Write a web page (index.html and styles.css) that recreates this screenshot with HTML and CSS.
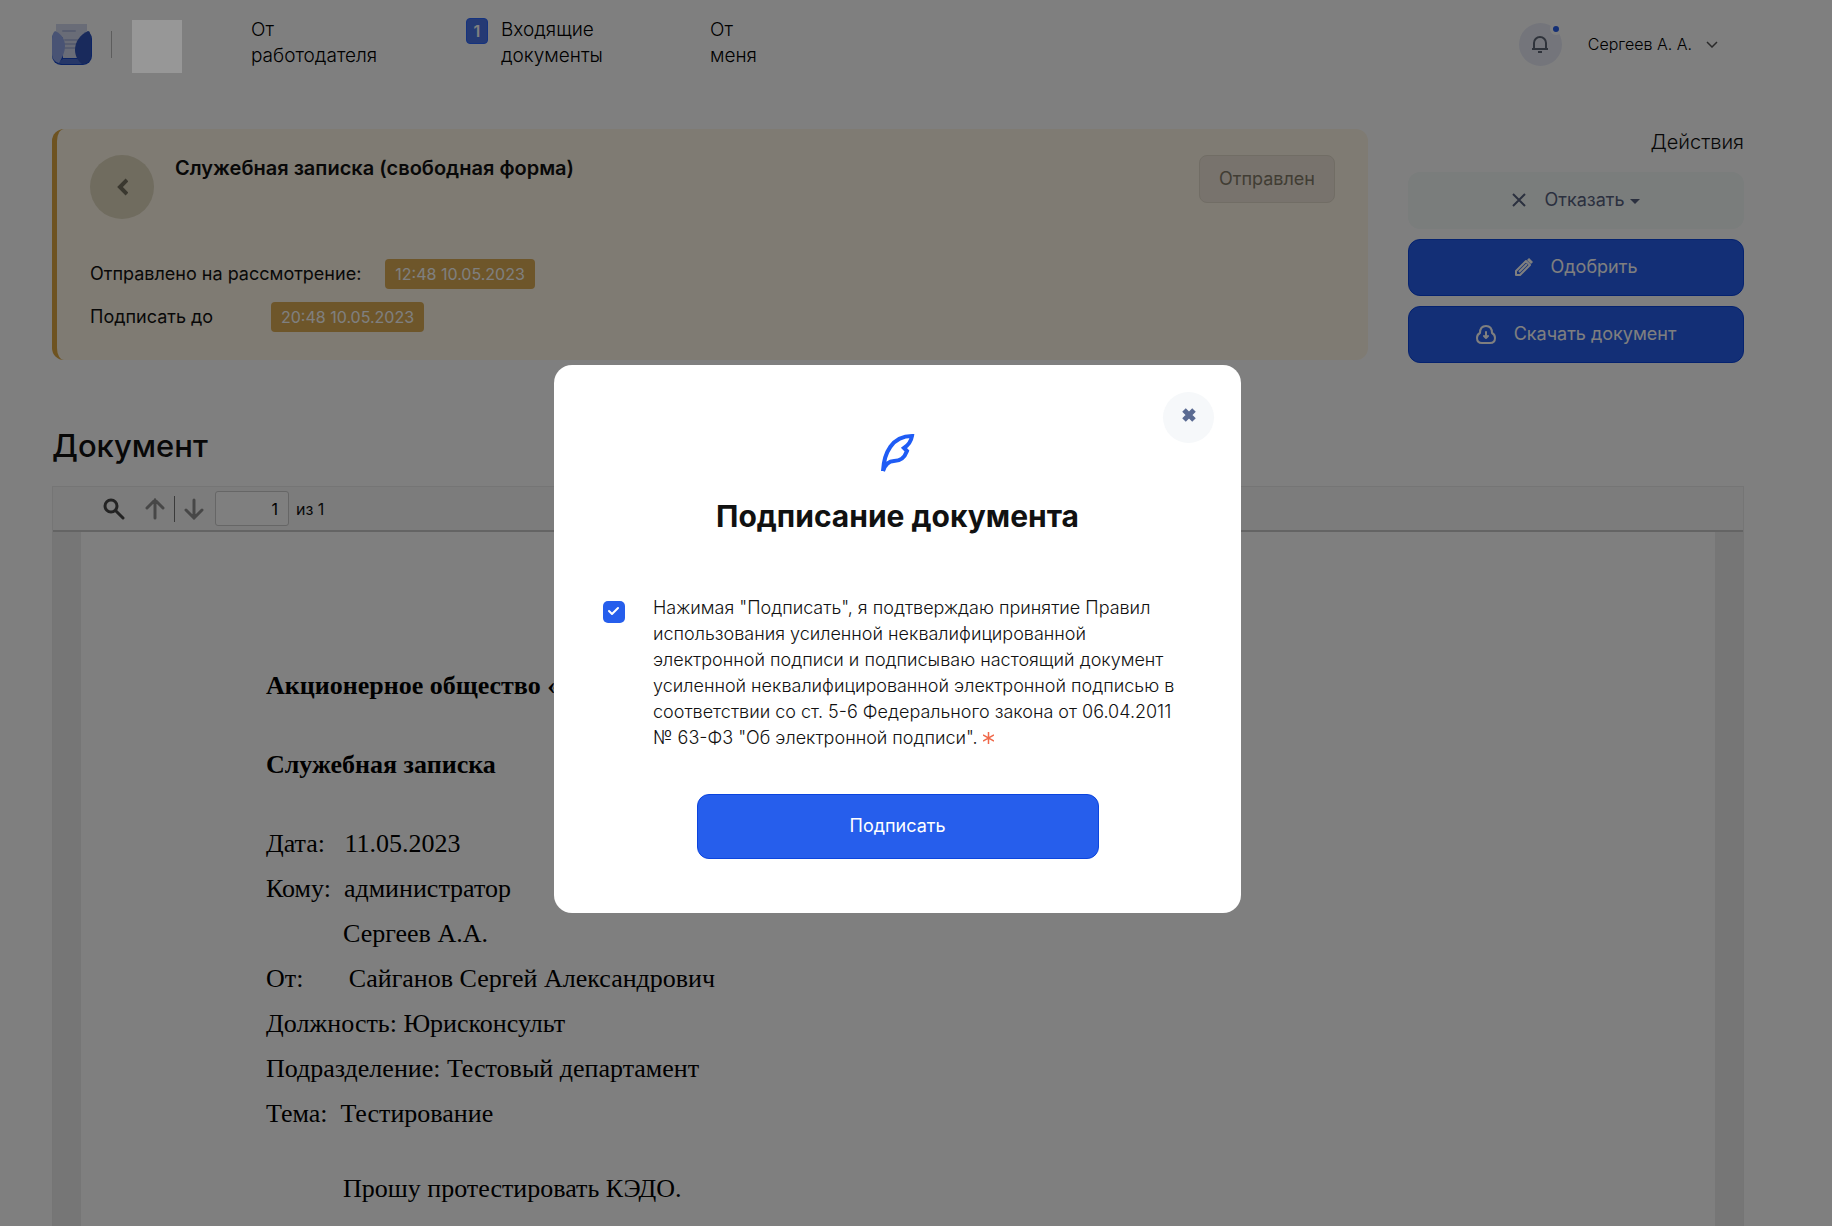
FILE: index.html
```
<!DOCTYPE html>
<html lang="ru">
<head>
    <meta charset="utf-8">
    <meta name="viewport" content="width=device-width, initial-scale=1">
    <title>Служебная записка</title>
    <link rel="stylesheet" href="styles.css">
</head>

<body>
    <header class="header">
        <a href="#" class="logo" aria-label="Главная">
            <svg width="40" height="42" viewBox="0 0 40 42">
                <rect x="0" y="6" width="40" height="35" rx="9" fill="#1747c9"/>
                <path d="M4 0h31v8l-6 8v18H11V14L4 8z" fill="#d3d9ee"/>
                <path d="M11 7h12M13 16h13M13 20h11M13 24h11" stroke="#b0bade" stroke-width="2" stroke-linecap="round"/>
                <path d="M11 35h17l6 4-5 1H10l-5-1z" fill="#4c6fd0"/>
                <path d="M3 7c7 3 10 9 10 15s-3 12-6 17c-4-1-7-4-7-9V15c0-4 1-6 3-8z" fill="#92a7e8"/>
                <path d="M37 7c-9 3-14 11-14 19 0 6 3 11 7 14 6 0 9-4 9-9V14c0-3-1-5-2-7z" fill="#3355b8"/>
            </svg>
        </a>
        <span class="divider"></span>
        <span class="company"></span>

        <nav class="nav">
            <a href="#">От<br>работодателя</a>
            <a href="#"><span class="count">1</span><span>Входящие<br>документы</span></a>
            <a href="#">От<br>меня</a>
        </nav>

        <button type="button" class="bell" aria-label="Уведомления">
            <svg width="16" height="18" viewBox="0 0 16 18" fill="none" stroke="#5f6676" stroke-width="2">
                <path d="M2 14V8a6 6 0 0 1 12 0v6M0 14h16M6 17h4"/>
            </svg>
            <span class="dot"></span>
        </button>
        <button type="button" class="user">
            Сергеев А. А.
            <svg width="12" height="8" viewBox="0 0 12 8" fill="none" stroke="#555">
                <path d="M1 2l5 5 5-5" stroke-width="1.5"/>
            </svg>
        </button>
    </header>

    <main class="main">
        <div class="top">
            <section class="card">
                <div class="card-head">
                    <a href="#" class="back" aria-label="Назад">
                        <svg width="12" height="18" viewBox="0 0 12 18" fill="none" stroke="#75705f" stroke-width="4">
                            <path d="M11 2L4 9l7 7"/>
                        </svg>
                    </a>
                    <h1>Служебная записка (свободная форма)</h1>
                    <span class="status">Отправлен</span>
                </div>
                <div class="card-row">
                    <span>Отправлено на рассмотрение:</span>
                    <time>12:48 10.05.2023</time>
                </div>
                <div class="card-row">
                    <span>Подписать до</span>
                    <time>20:48 10.05.2023</time>
                </div>
            </section>

            <aside class="actions">
                <h2>Действия</h2>
                <button type="button" class="btn btn-light">
                    <svg width="14" height="14" viewBox="0 0 14 14" fill="none" stroke="#56617f" stroke-width="2">
                        <path d="M1 1l12 12M13 1L1 13"/>
                    </svg>
                    <span>Отказать<span class="caret"></span></span>
                </button>
                <button type="button" class="btn btn-blue">
                    <svg width="18" height="18" viewBox="0 0 18 18" fill="none" stroke="#fff" stroke-width="2" stroke-linejoin="round">
                        <path d="M1 17v-4L11 3l4 4L5 17zM4 14l8-8"/>
                        <path d="M13 1l4 4" stroke-width="3"/>
                    </svg>
                    Одобрить
                </button>
                <button type="button" class="btn btn-blue">
                    <svg width="20" height="20" viewBox="0 0 20 20" fill="none" stroke="#fff" stroke-width="2" stroke-linecap="round" stroke-linejoin="round">
                        <path d="M6 19c-4 0-5-3-5-5 0-2 1-4 3-5 0-4 2-7 6-7s6 3 6 7c2 1 3 3 3 5 0 2-1 5-5 5zM10 8v6M8 12l2 2 2-2"/>
                    </svg>
                    Скачать документ
                </button>
            </aside>
        </div>

        <h2 class="section-title">Документ</h2>

        <section class="viewer">
            <div class="toolbar">
                <button type="button" class="tool" aria-label="Найти">
                    <svg width="22" height="22" viewBox="0 0 22 22" fill="none" stroke="#474747" stroke-width="3" stroke-linecap="round">
                        <circle cx="8" cy="8" r="6"/>
                        <path d="M13 13l7 7"/>
                    </svg>
                </button>
                <button type="button" class="tool" aria-label="Предыдущая страница">
                    <svg width="20" height="22" viewBox="0 0 20 22" fill="none" stroke="#8f8f8f" stroke-width="3" stroke-linecap="round">
                        <path d="M10 2v18M2 10l8-8 8 8"/>
                    </svg>
                </button>
                <span class="tool-line"></span>
                <button type="button" class="tool" aria-label="Следующая страница">
                    <svg width="20" height="22" viewBox="0 0 20 22" fill="none" stroke="#8f8f8f" stroke-width="3" stroke-linecap="round">
                        <path d="M10 2v18M2 12l8 8 8-8"/>
                    </svg>
                </button>
                <input type="text" id="page" value="1">
                <label for="page">из 1</label>
            </div>

            <div class="pages">
                <article class="sheet">
                    <h3>Акционерное общество «Тест»</h3>
                    <h3>Служебная записка</h3>
                    <p>Дата:   11.05.2023</p>
                    <p>Кому:  администратор</p>
                    <p class="indent">Сергеев А.А.</p>
                    <p>От:       Сайганов Сергей Александрович</p>
                    <p>Должность: Юрисконсульт</p>
                    <p>Подразделение: Тестовый департамент</p>
                    <p>Тема:  Тестирование</p>
                    <p class="indent body-text">Прошу протестировать КЭДО.</p>
                </article>
            </div>
        </section>
    </main>

    <div class="overlay">
        <form class="modal" role="dialog" aria-labelledby="modalTitle">
            <button type="button" class="close" aria-label="Закрыть">
                <svg width="14" height="14" viewBox="0 0 14 14" stroke="#5b6b92" stroke-width="5">
                    <path d="M2 2l10 10M12 2L2 12"/>
                </svg>
            </button>
            <svg class="feather" width="36" height="40" viewBox="0 0 36 40" fill="none" stroke="#1f5cf5" stroke-width="4">
                <path d="M3 38C4 20 12 3 32 3c-1 6-5 10-8 12l3 3c-3 8-7 10-13 10-5 0-9 4-11 10"/>
            </svg>
            <h2 id="modalTitle">Подписание документа</h2>
            <div class="agree">
                <input type="checkbox" id="agree" checked>
                <label for="agree">Нажимая "Подписать", я подтверждаю принятие Правил<br>
                    использования усиленной неквалифицированной<br>
                    электронной подписи и подписываю настоящий документ<br>
                    усиленной неквалифицированной электронной подписью в<br>
                    соответствии со ст. 5-6 Федерального закона от 06.04.2011<br>
                    № 63-ФЗ "Об электронной подписи". <svg width="11" height="12" viewBox="0 0 11 12" stroke="#f0694a" stroke-width="1.5"><path d="M5.5 0v12M0 3l11 6M11 3L0 9"/></svg></label>
            </div>
            <button type="button" class="submit-btn">Подписать</button>
        </form>
    </div>
</body>
</html>
```
FILE: styles.css
```
* {
    box-sizing: border-box;
}
body {
    display: flex;
    flex-direction: column;
    margin: 0;
    height: 100vh;
    overflow: hidden;
    padding: 0 88px 0 52px;
    font-family: Inter, "Liberation Sans", sans-serif;
    font-size: 18px;
    color: #111;
    background-color: #fff;
}
h1, h2, h3, p {
    margin: 0;
}
a {
    color: inherit;
    text-decoration: none;
}
button {
    font: inherit;
    border: none;
    padding: 0;
    cursor: pointer;
}
svg {
    flex-shrink: 0;
}

/* Header */
.header {
    display: flex;
    align-items: center;
    height: 88px;
}
.logo {
    display: flex;
    margin-top: 2px;
}
.divider {
    width: 1px;
    height: 27px;
    margin: 0 20px 0 19px;
    background-color: #bbb;
}
.company {
    position: relative;
    z-index: 20;
    width: 50px;
    height: 53px;
    margin-top: 4px;
    background-color: #979797;
}
.nav {
    display: grid;
    grid-template-columns: 215px 244px auto;
    margin-left: 69px;
    padding-bottom: 2px;
    font-size: 19px;
    font-weight: 300;
    line-height: 26px;
    color: #000;
}
.nav a {
    display: flex;
}
.count {
    width: 22px;
    height: 26px;
    margin: 1px 13px 0 0;
    border: 1px solid #2a66ff;
    border-radius: 4px;
    background-color: #4a74e8;
    color: #fff;
    font-size: 16px;
    font-weight: 600;
    line-height: 24px;
    text-align: center;
}
.bell {
    position: relative;
    display: flex;
    align-items: center;
    justify-content: center;
    width: 43px;
    height: 43px;
    margin-left: auto;
    border-radius: 50%;
    background-color: #e8ebf7;
}
.dot {
    position: absolute;
    top: 0;
    right: 0;
    width: 12px;
    height: 12px;
    border: 3px solid #fff;
    border-radius: 50%;
    background-color: #265eec;
}
.user {
    display: flex;
    align-items: center;
    gap: 14px;
    margin: 0 26px;
    background: none;
    color: #000;
    font-size: 16px;
    font-weight: 300;
}

/* Card with the document state */
.main {
    display: flex;
    flex: 1;
    flex-direction: column;
    min-height: 0;
    padding-top: 41px;
}
.top {
    display: flex;
    gap: 40px;
}
.card {
    flex: 1;
    height: 231px;
    padding: 26px 33px;
    border-left: 5px solid #dca742;
    border-radius: 12px;
    background-color: #fef6e6;
}
.card-head {
    display: flex;
    align-items: flex-start;
    margin-bottom: 40px;
}
.back {
    display: flex;
    align-items: center;
    justify-content: center;
    width: 64px;
    height: 64px;
    background-color: #e0d8be;
    border-radius: 50%;
}
.card h1 {
    flex: 1;
    margin-left: 21px;
    font-size: 20px;
    font-weight: 600;
    line-height: 26px;
}
.status {
    padding: 0 19px;
    border: 1px solid #e2dacb;
    border-radius: 8px;
    background-color: #f0e6da;
    color: #827b68;
    line-height: 46px;
}
.card-row {
    display: flex;
    gap: 24px;
    line-height: 30px;
}
.card-row span {
    min-width: 157px;
}
.card-row + .card-row {
    margin-top: 13px;
}
.card-row time {
    padding: 0 10px;
    border-radius: 4px;
    background-color: #dcac54;
    color: #fff;
    font-size: 16px;
}

/* Actions */
.actions {
    width: 336px;
}
.actions h2 {
    margin-bottom: 16px;
    font-size: 20px;
    font-weight: 300;
    line-height: 27px;
    text-align: right;
}
.btn {
    display: flex;
    align-items: center;
    justify-content: center;
    gap: 18px;
    width: 100%;
    height: 57px;
    margin-bottom: 10px;
    padding-bottom: 2px;
    border-radius: 12px;
}
.btn-light {
    background-color: #f4faf8;
    color: #56617f;
}
.btn-blue {
    border: 1px solid #0b44de;
    background-color: #265eec;
    color: #fff;
}
.caret {
    display: inline-block;
    margin-left: 5px;
    border: 5px solid transparent;
    border-top-color: #56617f;
    border-bottom: none;
    vertical-align: middle;
}

/* Document viewer */
.section-title {
    margin: 53px 0 20px;
    font-size: 31px;
    font-weight: 500;
    line-height: 40px;
}
.viewer {
    display: flex;
    flex: 1;
    flex-direction: column;
    min-height: 0;
    border: 1px solid #eaeaea;
    border-bottom: none;
}
.toolbar {
    display: flex;
    align-items: center;
    height: 45px;
    padding-left: 50px;
    border-bottom: 2px solid #c8c8c8;
    background-color: #f9f9f9;
    font-size: 16px;
}
.tool {
    display: flex;
    background: none;
}
.tool + .tool {
    margin-left: 20px;
}
.tool-line {
    width: 1px;
    height: 26px;
    margin: 0 9px;
    background-color: #777;
}
.toolbar input {
    width: 74px;
    height: 35px;
    margin: 0 7px 0 11px;
    padding: 0 10px;
    border: 1px solid #ccc;
    border-radius: 3px;
    font: inherit;
    text-align: right;
}
.pages {
    flex: 1;
    min-height: 0;
    padding: 0 28px;
    background-color: #ececec;
}
.sheet {
    height: 100%;
    padding: 131px 185px 0;
    background-color: #fff;
    color: #000;
    font-family: "Liberation Serif", serif;
    font-size: 26px;
    line-height: 45px;
}
.sheet h3 {
    margin-bottom: 34px;
    font-size: 26px;
}
.sheet p {
    white-space: pre;
}
.sheet .indent {
    text-indent: 77px;
}
.sheet .body-text {
    margin-top: 30px;
}

/* Signing dialog */
.overlay {
    position: fixed;
    inset: 0;
    z-index: 10;
    padding: 365px 37px 0 0;
    background-color: rgba(0, 0, 0, 0.5);
}
.modal {
    position: relative;
    display: flex;
    flex-direction: column;
    align-items: center;
    width: 687px;
    margin: 0 auto;
    padding: 68px 49px 54px;
    border-radius: 18px;
    background-color: #fff;
}
.close {
    position: absolute;
    top: 27px;
    right: 27px;
    width: 51px;
    height: 51px;
    padding-bottom: 4px;
    border-radius: 50%;
    background-color: #f6f8fa;
}
.modal h2 {
    margin: 23px 0 59px;
    font-size: 30px;
    font-weight: 700;
    line-height: 40px;
}
.agree {
    display: flex;
    width: 100%;
    gap: 28px;
    font-weight: 300;
    line-height: 26px;
    white-space: nowrap;
}
.agree input {
    appearance: none;
    flex-shrink: 0;
    width: 22px;
    height: 22px;
    margin: 6px 0 0;
    border-radius: 5px;
    background: #265eec url("data:image/svg+xml,%3Csvg xmlns='http://www.w3.org/2000/svg' width='22' height='22'%3E%3Cpath d='M6 10l3 3 6-6' fill='none' stroke='white' stroke-width='2' stroke-linecap='round' stroke-linejoin='round'/%3E%3C/svg%3E");
}
.submit-btn {
    width: 402px;
    height: 65px;
    margin-top: 43px;
    padding-bottom: 2px;
    border: 1px solid #0b44de;
    border-radius: 12px;
    background-color: #265eec;
    color: #fff;
}
```
